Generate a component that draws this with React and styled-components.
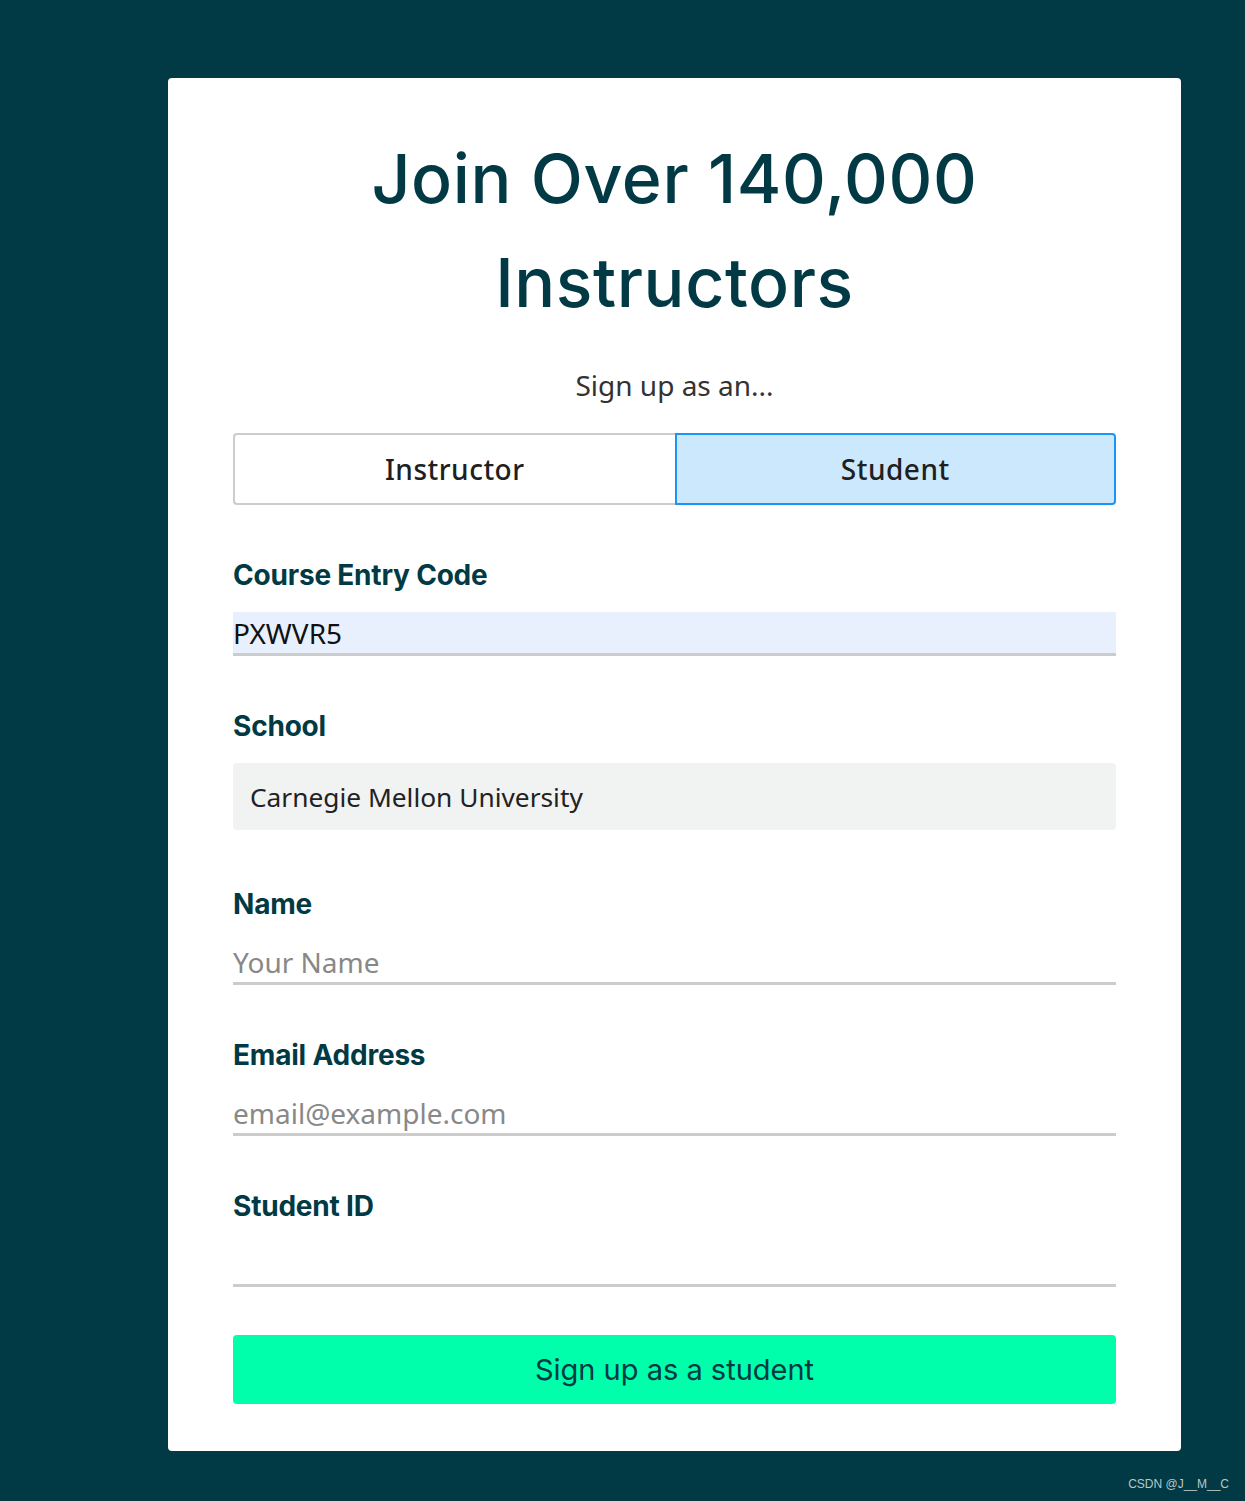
import React from "react";
import styled, { createGlobalStyle } from "styled-components";

const Global = createGlobalStyle`
  html, body { margin: 0; padding: 0; }
  body {
    background: #013a44;
    min-height: 1501px;
    font-family: "Noto Sans", "Open Sans", sans-serif;
  }
  * { box-sizing: border-box; }
`;

const Page = styled.div`
  position: relative;
  min-height: 1501px;
  padding: 78px 64px 50px 168px;
`;

const Card = styled.div`
  width: 1013px;
  background: #ffffff;
  border-radius: 4px;
  padding: 48px 65px 47px 65px;
  display: flex;
  flex-direction: column;
`;

const Title = styled.h1`
  margin: 0;
  text-align: center;
  font-family: Inter, "Noto Sans", sans-serif;
  font-weight: 500;
  font-size: 68px;
  line-height: 104px;
  color: #013a44;
  letter-spacing: 0.6px;
`;

const Sub = styled.p`
  margin: 31px 0 0;
  text-align: center;
  font-size: 28px;
  line-height: 40px;
  color: #333;
`;

const Toggle = styled.div`
  margin-top: 28px;
  display: grid;
  grid-template-columns: 1fr 1fr;
  height: 72px;
`;

const ToggleBtn = styled.button`
  font-family: "Noto Sans", sans-serif;
  font-size: 28px;
  font-weight: 500;
  color: #1f1f1f;
  letter-spacing: 0.5px;
  background: ${(p) => (p.$active ? "#cce8fd" : "#ffffff")};
  border: 2px solid ${(p) => (p.$active ? "#1a95f5" : "#cccccc")};
  border-radius: ${(p) => (p.$active ? "0 4px 4px 0" : "4px 0 0 4px")};
  ${(p) => (!p.$active ? "border-right: none;" : "")}
  padding: 0;
  cursor: pointer;
`;

const Field = styled.div`
  display: flex;
  flex-direction: column;
  margin-top: ${(p) => p.$top}px;
`;

const Label = styled.label`
  font-family: Inter, "Noto Sans", sans-serif;
  font-weight: 700;
  font-size: 28px;
  line-height: 40px;
  color: #013a44;
  margin-bottom: 17px;
  letter-spacing: -0.2px;
`;

const LineInput = styled.input`
  height: 44px;
  border: none;
  border-bottom: 3px solid #cccccc;
  background: ${(p) => (p.$filled ? "#e8f0fe" : "transparent")};
  padding: 0;
  font-family: "Noto Sans", sans-serif;
  font-size: 28px;
  color: #111;
  outline: none;
  &::placeholder { color: #888; }
`;

const SelectBox = styled.div`
  height: 67px;
  background: #f1f2f2;
  border-radius: 4px;
  padding: 0 17px;
  display: flex;
  align-items: center;
  font-size: 26.3px;
  color: #222;
`;

const Submit = styled.button`
  margin-top: 48px;
  height: 69px;
  background: #00ffaa;
  border: none;
  border-radius: 4px;
  font-family: Inter, "Noto Sans", sans-serif;
  font-size: 29px;
  font-weight: 400;
  color: #013a44;
  cursor: pointer;
`;

const Watermark = styled.div`
  position: absolute;
  right: 16px;
  bottom: 10px;
  font-family: "Liberation Sans", Arial, sans-serif;
  font-size: 12px;
  color: #b9c6c8;
`;

export default function App() {
  return (
    <>
      <Global />
      <Page>
        <Card>
          <Title>
            Join Over 140,000
            <br />
            Instructors
          </Title>
          <Sub>Sign up as an...</Sub>
          <Toggle>
            <ToggleBtn>Instructor</ToggleBtn>
            <ToggleBtn $active>Student</ToggleBtn>
          </Toggle>
          <Field $top={50}>
            <Label>Course Entry Code</Label>
            <LineInput $filled defaultValue="PXWVR5" />
          </Field>
          <Field $top={50}>
            <Label>School</Label>
            <SelectBox>Carnegie Mellon University</SelectBox>
          </Field>
          <Field $top={54}>
            <Label>Name</Label>
            <LineInput placeholder="Your Name" />
          </Field>
          <Field $top={50}>
            <Label>Email Address</Label>
            <LineInput placeholder="email@example.com" />
          </Field>
          <Field $top={50}>
            <Label>Student ID</Label>
            <LineInput />
          </Field>
          <Submit>Sign up as a student</Submit>
        </Card>
        <Watermark>CSDN @J__M__C</Watermark>
      </Page>
    </>
  );
}
